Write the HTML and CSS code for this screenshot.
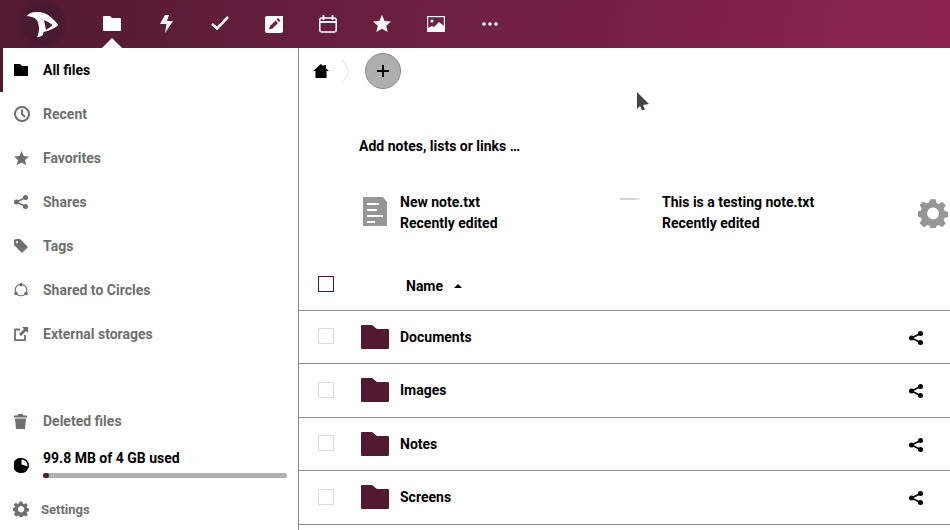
FILE: index.html
```html
<!DOCTYPE html>
<html lang="en">
<head>
<meta charset="utf-8">
<title>Files</title>
<link rel="stylesheet" href="styles.css">
</head>
<body>
<header class="topbar">
  <div class="logo">
    <svg width="36" height="28" viewBox="0 0 36 28"><path fill="#fff" fill-rule="evenodd" d="M2 6C4 3 7 2 11 2C16 1.500 21 3 25 6.500C28 9 31 12 33.500 15C30 18 25 20.500 18.500 22L18 25C16 26.500 14 27 12 27.300C13 25.500 14 22 14 18.500C14 14 12.500 10 9.500 8C7 7 4.500 6 2 6ZM19 10L21 20C23.500 18.500 25.500 17 27.500 15C25 13 22 11 19 10Z"/></svg>
  </div>
  <nav class="apps">
    <a class="app active"><svg width="18" height="15" viewBox="0 0 18 15"><path fill="#fff" d="M0 1a1 1 0 0 1 1-1h6l2 2h8a1 1 0 0 1 1 1v11a1 1 0 0 1-1 1H1a1 1 0 0 1-1-1z"/></svg></a>
    <a class="app"><svg width="13" height="18" viewBox="0 0 13 18"><path fill="#fff" d="M5 0h4L7 6h6L5 18l1.500-9H0z"/></svg></a>
    <a class="app"><svg width="18" height="15" viewBox="0 0 18 15"><path fill="none" stroke="#fff" stroke-width="2.600" d="M1 8l5 4.500L17 1"/></svg></a>
    <a class="app"><svg width="18" height="18" viewBox="0 0 18 18"><path fill="#fff" d="M2 1h16v15a2 2 0 0 1-2 2H2a2 2 0 0 1-2-2V3a2 2 0 0 1 2-2z"/><path fill="#70203f" d="M4 14.500l1-3.500 5.500-5.500 2.500 2.500-5.500 5.500zM11.500 4.500l1.500-1.500 2.500 2.500-1.500 1.500z"/></svg></a>
    <a class="app"><svg width="18" height="18" viewBox="0 0 18 18"><rect x=".8" y="3" width="16.400" height="14" rx="2" fill="none" stroke="#fff" stroke-width="1.500"/><path fill="#fff" d="M1 6h16v2H1zM3.500 0h2v5h-2zM12.500 0h2v5h-2z"/></svg></a>
    <a class="app"><svg width="18" height="18" viewBox="0 0 18 18"><path fill="#fff" d="M9 0l2.700 6 6.300.6-4.800 4.200 1.500 6.200L9 13.700 3.300 17l1.500-6.200L0 6.600l6.300-.6z"/></svg></a>
    <a class="app"><svg width="18" height="16" viewBox="0 0 18 16"><rect x=".6" y=".6" width="16.800" height="14.800" fill="none" stroke="#fff" stroke-width="1.200"/><circle cx="5" cy="5" r="1.600" fill="#fff"/><path fill="#fff" d="M1 15v-3l4-2 2 1 5-5 5 4v5z"/></svg></a>
    <a class="app"><svg width="16" height="4" viewBox="0 0 16 4"><circle cx="2" cy="2" r="1.800" fill="#fff"/><circle cx="8" cy="2" r="1.800" fill="#fff"/><circle cx="14" cy="2" r="1.800" fill="#fff"/></svg></a>
  </nav>
</header>

<div class="layout">
  <aside class="sidebar">
    <ul class="nav">
      <li class="nav-item selected"><span class="nav-icon"><svg width="14" height="12" viewBox="0 0 14 12"><path d="M0 0h6l2 2h6v10H0z"/></svg></span>All files</li>
      <li class="nav-item"><span class="nav-icon"><svg width="16" height="16" viewBox="0 0 16 16"><circle cx="8" cy="8" r="7" fill="none" stroke="currentColor" stroke-width="2"/><path fill="none" stroke="currentColor" stroke-width="2" d="M8 3.500V8l3 3"/></svg></span>Recent</li>
      <li class="nav-item"><span class="nav-icon"><svg width="15" height="15" viewBox="0 0 18 18"><path d="M9 0l2.700 6 6.300.6-4.800 4.200 1.500 6.200L9 13.700 3.300 17l1.500-6.200L0 6.600l6.300-.6z"/></svg></span>Favorites</li>
      <li class="nav-item"><span class="nav-icon"><svg width="14" height="14" viewBox="0 0 14 14"><use href="#share"/></svg></span>Shares</li>
      <li class="nav-item"><span class="nav-icon"><svg width="14" height="14" viewBox="0 0 14 14"><path d="M0 2a2 2 0 0 1 2-2h4l8 8-6 6-8-8zM3 2a1.200 1.200 0 1 0 .01 0z" fill-rule="evenodd"/></svg></span>Tags</li>
      <li class="nav-item"><span class="nav-icon"><svg width="14" height="14" viewBox="0 0 14 14"><circle cx="7" cy="7" r="5.800" fill="none" stroke="currentColor" stroke-width="1.100"/><circle cx="7" cy="1.800" r="1.800"/><circle cx="2" cy="10.500" r="1.800"/><circle cx="12" cy="10.500" r="1.800"/></svg></span>Shared to Circles</li>
      <li class="nav-item"><span class="nav-icon"><svg width="14" height="14" viewBox="0 0 14 14"><path fill="none" stroke="currentColor" stroke-width="1.800" d="M6 2.500H1v10.600h10V8"/><path d="M8 0h6v6l-2-2-5 5-2-2 5-5z"/></svg></span>External storages</li>
    </ul>
    <div class="sidebar-foot">
      <div class="nav-item"><span class="nav-icon"><svg width="13" height="15" viewBox="0 0 13 15"><path d="M4.500 0h4l1 1.500H13v2H0v-2h3.500zM1 4.500h11L11 15H2z"/></svg></span>Deleted files</div>
      <div class="quota">
        <span class="nav-icon dark"><svg width="15" height="15" viewBox="0 0 14 14"><circle cx="7" cy="7" r="6.300" fill="#fff" stroke="#000" stroke-width="1.400"/><path d="M7 0v6l6 2A7 7 0 1 1 7 0z"/></svg></span>
        <div class="quota-body">
          <div class="quota-text">99.8 MB of 4 GB used</div>
          <div class="bar"><div class="bar-fill" style="width:2.500%"></div></div>
        </div>
      </div>
      <div class="settings"><span class="settings-icon"><svg width="16" height="16" viewBox="0 0 32 32"><use href="#gear"/></svg></span>Settings</div>
    </div>
  </aside>

  <main class="main">
    <div class="crumbs">
      <svg class="home" width="16" height="14" viewBox="0 0 16 14"><path d="M8 0l2.500 2.200V1H13v3.400L16 7h-2.500v7h-11V7H0z"/></svg>
      <svg class="chev" width="9" height="25" viewBox="0 0 9 25"><path fill="none" stroke="#e2e2e2" d="M1 0l7 12.500L1 25"/></svg>
      <button class="add"><svg width="14" height="14" viewBox="0 0 14 14"><path d="M6 1h2v5h5v2H8v5H6V8H1V6h5z"/></svg></button>
    </div>
    <div class="notes-prompt">Add notes, lists or links …</div>
    <div class="recent">
      <div class="recent-item first">
        <svg class="doc" width="24" height="29" viewBox="0 0 24 29"><path fill="#969696" d="M0 0h20l4 5v24H0z"/><path stroke="#fff" stroke-width="2" d="M4 7h12M4 13h10M4 19h16M4 25h8"/></svg>
        <div class="recent-text">New note.txt<br>Recently edited</div>
      </div>
      <div class="recent-item second">
        <span class="thumb"></span>
        <div class="recent-text">This is a testing note.txt<br>Recently edited</div>
      </div>
      <svg class="gear-big" width="30" height="30" viewBox="0 0 32 32"><use href="#gear"/></svg>
    </div>
    <div class="table-head">
      <span class="check head-check"></span>
      <span class="col-name">Name</span>
      <span class="sort"></span>
    </div>
    <div class="row"><span class="check"></span><svg class="folder" width="28" height="24" viewBox="0 0 28 24"><use href="#folder"/></svg><span class="fname">Documents</span><svg class="share" width="14" height="14" viewBox="0 0 14 14"><use href="#share"/></svg></div>
    <div class="row"><span class="check"></span><svg class="folder" width="28" height="24" viewBox="0 0 28 24"><use href="#folder"/></svg><span class="fname">Images</span><svg class="share" width="14" height="14" viewBox="0 0 14 14"><use href="#share"/></svg></div>
    <div class="row"><span class="check"></span><svg class="folder" width="28" height="24" viewBox="0 0 28 24"><use href="#folder"/></svg><span class="fname">Notes</span><svg class="share" width="14" height="14" viewBox="0 0 14 14"><use href="#share"/></svg></div>
    <div class="row"><span class="check"></span><svg class="folder" width="28" height="24" viewBox="0 0 28 24"><use href="#folder"/></svg><span class="fname">Screens</span><svg class="share" width="14" height="14" viewBox="0 0 14 14"><use href="#share"/></svg></div>
  </main>
</div>

<svg class="cursor" width="16" height="24" viewBox="0 0 16 24"><path fill="#fff" fill-opacity=".8" d="M0 0l15 15-5 1 2 7-4 1-3-7-5 3z"/><path fill="#444" d="M1 1v17l3-3 2 4h3l-2-5 6-1z"/></svg>

<svg class="defs" width="0" height="0">
  <defs>
    <g id="share"><circle cx="11.500" cy="2.500" r="2.500"/><circle cx="2.500" cy="7" r="2.500"/><circle cx="11.500" cy="11.500" r="2.500"/><path fill="none" stroke="currentColor" stroke-width="1.600" d="M11.500 2.500L2.500 7l9 4.500"/></g>
    <path id="gear" fill-rule="evenodd" d="M13 0h6l1 4.500 2.800 1.200 4-2.500 4.200 4.200-2.500 4 1.200 2.800 4.300 1v6l-4.300 1-1.200 2.800 2.500 4-4.200 4.200-4-2.500-2.800 1.200-1 4.300h-6l-1-4.300-2.800-1.200-4 2.500L0 28.500l2.500-4-1.200-2.800L-3 20.700v-6l4.300-1 1.200-2.800-2.500-4L4.200 2.700l4 2.500L11 4zM16 10a7 7 0 1 0 .01 0z" transform="translate(1.700 1.200) scale(.9)"/>
    <path id="folder" d="M0 1A1 1 0 0 1 1 0H11l5 4h11a1 1 0 0 1 1 1v18a1 1 0 0 1-1 1H1a1 1 0 0 1-1-1z"/>
  </defs>
</svg>
</body>
</html>
```

FILE: styles.css
```css
* { box-sizing: border-box; }
html, body { margin: 0; height: 530px; overflow: hidden; }
body {
  position: relative;
  background: #fff;
  font-family: Roboto, "Liberation Sans", sans-serif;
  font-size: 14px;
  font-weight: 700;
  color: #000;
  display: flex;
  flex-direction: column;
}
.topbar {
  height: 48px;
  flex: none;
  display: flex;
  align-items: center;
  background: linear-gradient(100deg, #521a30 0%, #6d2040 45%, #8c2250 100%);
}
.logo {
  width: 85px;
  height: 48px;
  padding: 10px 0 0 25px;
  background: radial-gradient(circle at 43px 23px, #4a1a30 0, #4a1a30 20px, transparent 26px);
}
.logo svg { display: block; }
.apps { display: flex; height: 48px; }
.app {
  position: relative;
  width: 54px;
  display: flex;
  align-items: center;
  justify-content: center;
  padding-bottom: 1px;
}
.app.active::after {
  content: "";
  position: absolute;
  left: 50%;
  bottom: 0;
  margin-left: -10px;
  border: 10px solid transparent;
  border-top: 0;
  border-bottom: 10px solid #fff;
}
.layout { flex: 1; display: flex; min-height: 0; }
.sidebar {
  width: 299px;
  flex: none;
  border-right: 1px solid #8c8c8c;
  display: flex;
  flex-direction: column;
  color: #6f6f6f;
}
.nav { list-style: none; margin: 0; padding: 0; flex: 1; }
.nav-item {
  height: 44px;
  display: flex;
  align-items: center;
  padding-left: 14px;
}
.nav-item svg { fill: currentColor; }
.nav-item.selected {
  color: #000;
  border-left: 3px solid #521a30;
  padding-left: 11px;
}
.nav-icon {
  width: 29px;
  flex: none;
  display: flex;
  align-items: center;
}
.nav-icon.dark { color: #000; }
.sidebar-foot { display: flex; flex-direction: column; }
.quota {
  display: flex;
  align-items: center;
  height: 45px;
  padding: 0 11px 0 14px;
  color: #000;
}
.quota-body { flex: 1; align-self: flex-start; padding-top: 6px; }
.quota-text { line-height: 18px; margin-bottom: 6px; }
.bar { height: 5px; border-radius: 3px; background: #b0b0b0; }
.bar-fill { height: 5px; border-radius: 3px; background: #521a30; }
.settings {
  height: 42px;
  display: flex;
  align-items: center;
  padding: 0 0 0 13px;
  font-size: 13px;
  color: #6f6f6f;
}
.settings svg { fill: #6f6f6f; display: block; }
.settings-icon { width: 28px; flex: none; }
.main { flex: 1; min-width: 0; display: flex; flex-direction: column; }
.crumbs {
  height: 46px;
  display: flex;
  align-items: center;
  padding-left: 14px;
  flex: none;
}
.home { margin-right: 12px; }
.chev { margin-right: 15px; }
.add {
  width: 36px;
  height: 36px;
  padding: 0;
  border: 1px solid #8a8a8a;
  border-radius: 50%;
  background: #aeaeae;
  display: flex;
  align-items: center;
  justify-content: center;
}
.notes-prompt { margin: 42px 0 0 60px; line-height: 20px; }
.recent {
  height: 46px;
  margin-top: 35px;
  display: flex;
  flex: none;
  position: relative;
}
.recent-item { display: flex; }
.recent-item.first { width: 262px; padding-left: 64px; }
.recent-item.second { width: 299px; padding-left: 59px; }
.doc { margin: 6px 13px 0 0; flex: none; }
.recent-text { line-height: 21px; padding-top: 1px; white-space: nowrap; }
.thumb {
  width: 20px;
  height: 2px;
  margin: 7px 22px 0 0;
  background: linear-gradient(90deg, #d4d4d4 70%, #ececec);
  flex: none;
}
.gear-big { fill: #969696; position: absolute; right: 2px; top: 7px; }
.table-head {
  height: 53px;
  display: flex;
  align-items: center;
  border-bottom: 1px solid #8c8c8c;
  margin-top: 21px;
  padding-left: 19px;
}
.check {
  width: 16px;
  height: 16px;
  border: 1px solid #dcdcdc;
  flex: none;
  margin-right: 35px;
}
.head-check { border-color: #521a30; margin-top: -1px; margin-right: 72px; }
.col-name { margin-top: 3px; }
.sort {
  width: 0;
  height: 0;
  margin: 3px 0 0 11px;
  border: 4px solid transparent;
  border-top: 0;
  border-bottom: 4px solid #000;
}
.row {
  height: 53px;
  display: flex;
  align-items: center;
  padding-left: 19px;
  border-bottom: 1px solid #8c8c8c;
  flex: none;
}
.row:nth-child(even) { height: 54px; padding-bottom: 1px; }
.row:nth-child(odd) .check { margin-top: -2px; }
.folder { fill: #521a30; flex: none; margin: 0 11px 0 -8px; }
.fname { flex: 1; }
.share { fill: #000; color: #000; margin: 2px 27px 0 0; flex: none; }
.cursor { position: absolute; left: 636px; top: 91px; }
.defs { position: absolute; }
```
